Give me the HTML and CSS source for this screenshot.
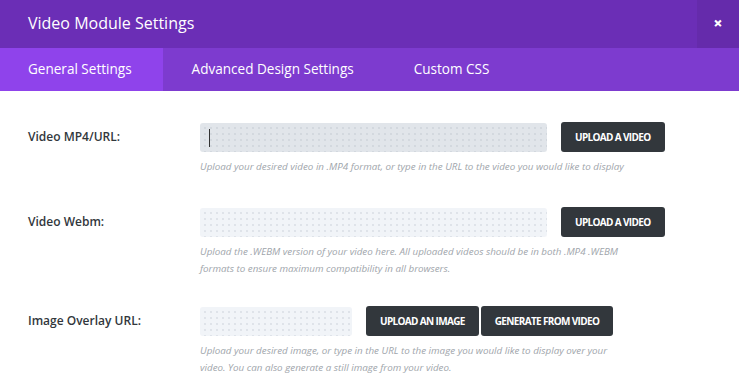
FILE: index.html
```html
<!DOCTYPE html>
<html lang="en">
<head>
<meta charset="utf-8">
<title>Video Module Settings</title>
<link rel="stylesheet" href="styles.css">
</head>
<body>
<div class="modal">
  <header class="modal-header">
    <h1 class="modal-title">Video Module Settings</h1>
    <button class="close-btn" aria-label="Close">&#x2715;</button>
  </header>
  <nav class="tabs">
    <a class="tab active">General Settings</a>
    <a class="tab">Advanced Design Settings</a>
    <a class="tab">Custom CSS</a>
  </nav>
  <main class="content">
    <div class="row row-1">
      <label class="label">Video MP4/URL:</label>
      <div class="field">
        <div class="controls">
          <div class="input input-wide focused"><span class="caret"></span></div>
          <button class="btn">UPLOAD A VIDEO</button>
        </div>
        <p class="desc">Upload your desired video in .MP4 format, or type in the URL to the video you would like to display</p>
      </div>
    </div>
    <div class="row row-2">
      <label class="label">Video Webm:</label>
      <div class="field">
        <div class="controls">
          <div class="input input-wide"></div>
          <button class="btn">UPLOAD A VIDEO</button>
        </div>
        <p class="desc">Upload the .WEBM version of your video here. All uploaded videos should be in both .MP4 .WEBM formats to ensure maximum compatibility in all browsers.</p>
      </div>
    </div>
    <div class="row row-3">
      <label class="label">Image Overlay URL:</label>
      <div class="field">
        <div class="controls">
          <div class="input input-short"></div>
          <div class="btn-group">
            <button class="btn">UPLOAD AN IMAGE</button>
            <button class="btn">GENERATE FROM VIDEO</button>
          </div>
        </div>
        <p class="desc">Upload your desired image, or type in the URL to the image you would like to display over your video. You can also generate a still image from your video.</p>
      </div>
    </div>
  </main>
</div>
</body>
</html>
```

FILE: styles.css
```css
* { box-sizing: border-box; }
html, body { margin: 0; padding: 0; background: #fff; }
body {
  font-family: "Open Sans", "Liberation Sans", sans-serif;
  width: 739px;
  height: 389px;
  overflow: hidden;
}
.modal { width: 739px; }
.modal-header {
  height: 48px;
  background: #6b2eb6;
  display: flex;
  align-items: stretch;
}
.modal-title {
  flex: 1;
  margin: 0;
  padding-left: 28px;
  font-size: 16px;
  font-weight: 400;
  line-height: 47px;
  color: #fff;
}
.close-btn {
  width: 42px;
  border: 0;
  background: #652bab;
  color: #fff;
  font-size: 10px;
  font-weight: 700;
  padding: 0 0 1px 0;
  font-family: "DejaVu Sans", sans-serif;
  -webkit-text-stroke: 0.8px #fff;
}
.tabs {
  height: 43px;
  background: #7d3bcf;
  display: flex;
}
.tab {
  padding: 0 31px 0 29px;
  line-height: 43px;
  font-size: 13.55px;
  color: #fff;
}
.tab:first-child { padding-left: 28px; }
.tab.active { background: #8f43eb; }
.content { padding-top: 31px; }
.row {
  display: grid;
  grid-template-columns: 172px 1fr;
  padding-left: 28px;
}
.row-1 { margin-bottom: 32px; }
.row-2 { margin-bottom: 29px; }
.label {
  font-size: 12px;
  font-weight: 600;
  color: #32373c;
  line-height: 30px;
}
.controls {
  display: flex;
  align-items: center;
  gap: 14px;
}
.input {
  height: 29px;
  border-radius: 3px;
  background-color: #f1f4f8;
  background-image: radial-gradient(circle, rgba(160,170,180,0.35) 0.6px, transparent 0.9px);
  background-size: 6px 6px;
  background-position: 2px 2px;
  position: relative;
}
.input.focused { background-color: #e1e5ea; }
.input-wide { width: 347px; }
.input-short { width: 152px; }
.caret {
  position: absolute;
  left: 9px;
  top: 6px;
  width: 1px;
  height: 18px;
  background: #333;
}
.btn-group { display: flex; gap: 2px; }
.btn {
  height: 30px;
  border: 0;
  border-radius: 3px;
  background: #32373c;
  color: #fff;
  font-family: "Open Sans", "Liberation Sans", sans-serif;
  font-size: 10px;
  font-weight: 700;
  letter-spacing: -0.65px;
  padding: 0 14px;
  white-space: nowrap;
}
.desc {
  margin: 6px 0 0 0;
  max-width: 426px;
  font-size: 9.8px;
  font-style: italic;
  line-height: 17px;
  color: #a0a5ab;
}
```
